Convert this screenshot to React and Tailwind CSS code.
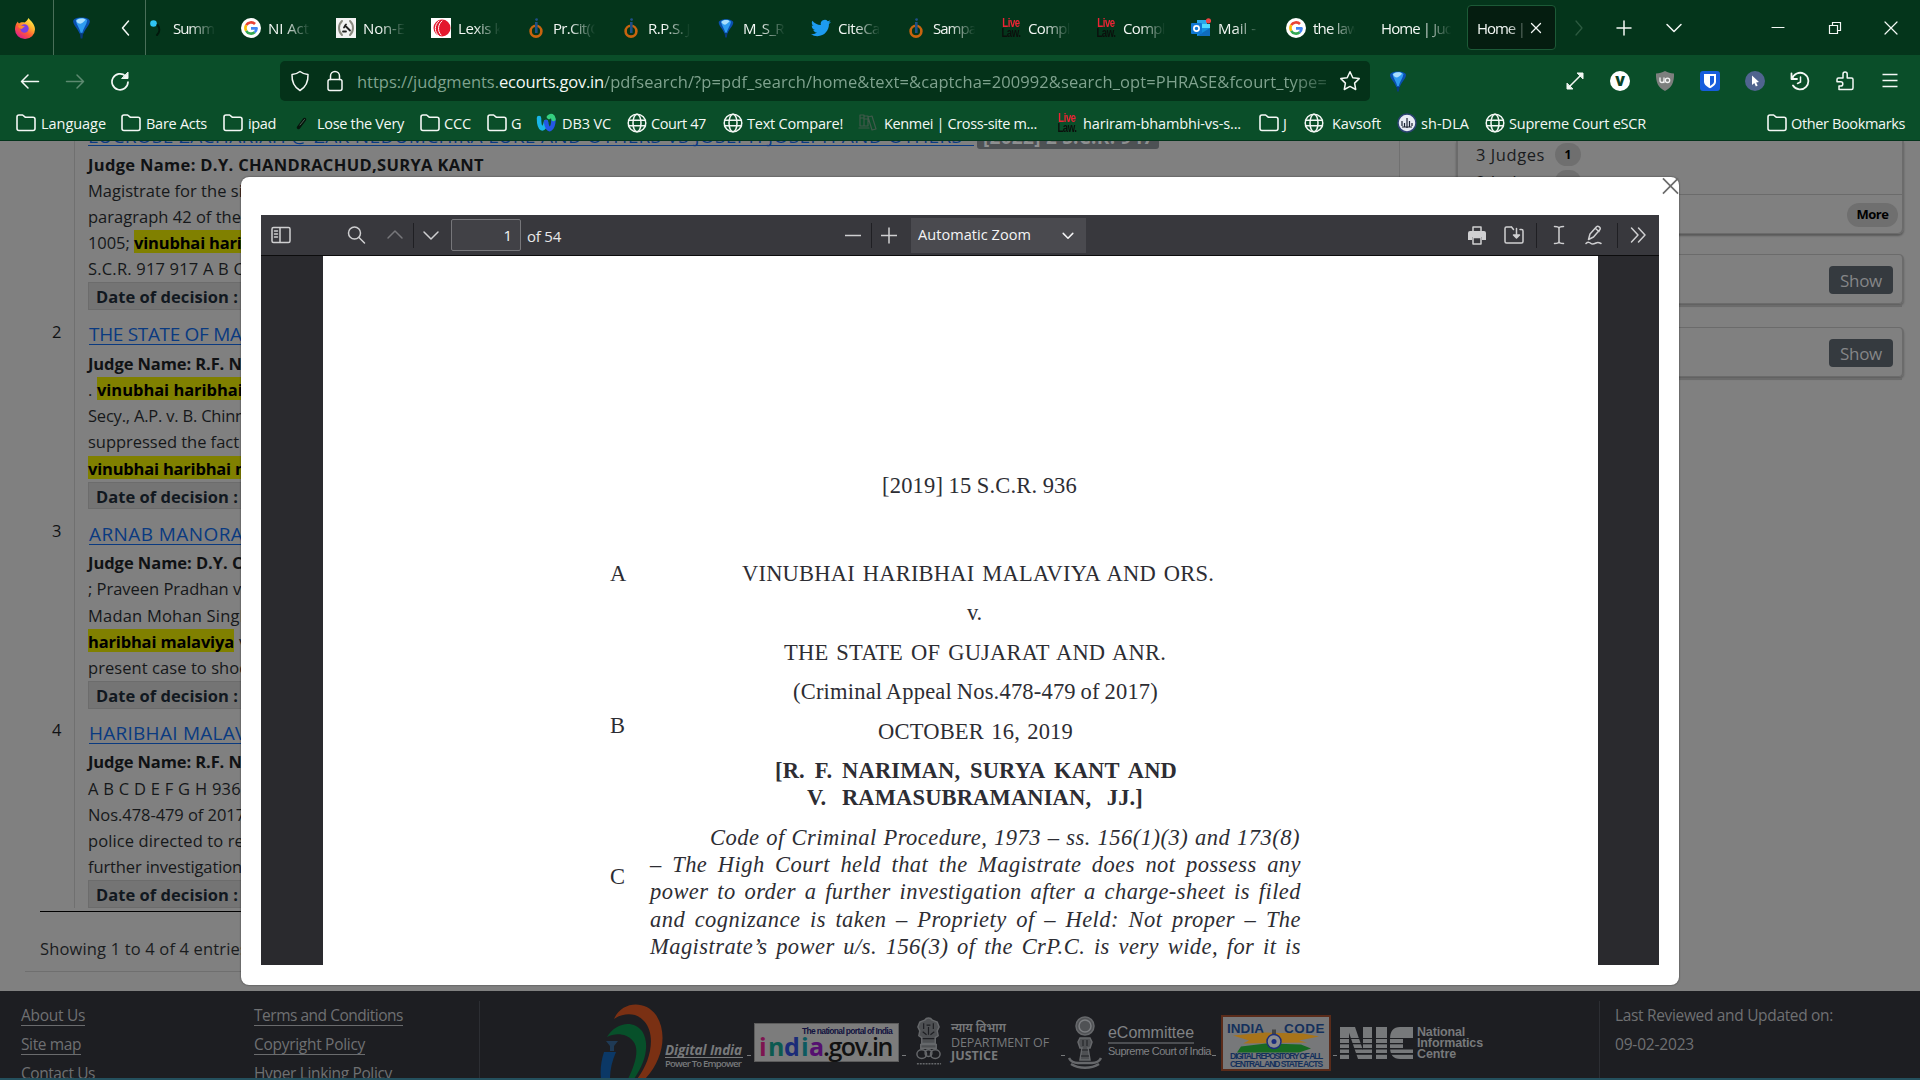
import React, { useLayoutEffect, useRef } from "react";

/*
 * Text that is spaced to occupy exactly `w` pixels. Without `track` the
 * difference goes between letters; with it, letters get `track` pixels and the
 * rest goes between words, as in justified print.
 */
function Fit({ w, track, className = "", children }) {
  const ref = useRef(null);
  useLayoutEffect(() => {
    const el = ref.current;
    const text = el.textContent;
    const spaces = text.split(" ").length - 1;
    el.style.wordSpacing = "0px";
    if (track !== undefined && spaces > 0) {
      el.style.letterSpacing = track + "px";
      el.style.wordSpacing = (w - el.getBoundingClientRect().width) / spaces + "px";
    } else {
      el.style.letterSpacing = "0px";
      el.style.letterSpacing = (w - el.getBoundingClientRect().width) / text.length + "px";
    }
  }, [w, track, children]);
  return (
    <span ref={ref} className={"inline-block whitespace-pre shrink-0 " + className}>
      {children}
    </span>
  );
}

function Svg({ s = 20, vb = 20, className = "", children }) {
  return (
    <svg width={s} height={s} viewBox={`0 0 ${vb} ${vb}`} fill="none" stroke="currentColor" strokeWidth="1.5" strokeLinecap="round" strokeLinejoin="round" className={"shrink-0 " + className}>
      {children}
    </svg>
  );
}

const Folder = () => (
  <Svg><path strokeWidth="1.6" d="M1 15.5V4a2 2 0 0 1 2-2h3.6l2.600 2.200H17a2 2 0 0 1 2 2v9.300a2 2 0 0 1-2 2H3a2 2 0 0 1-2-2z" /></Svg>
);
const Globe = () => (
  <Svg>
    <circle cx="10" cy="10" r="8.8" />
    <ellipse cx="10" cy="10" rx="4" ry="8.8" />
    <path d="M1.5 7.3h17M1.5 12.7h17" />
  </Svg>
);
const Balloon = ({ s = 22 }) => (
  <Svg s={s} vb={22}>
    <path stroke="none" fill="#0a4fae" d="M3 5C3 3 6.500 1.500 11 1.500S19 3 19 5c0 3.500-4.500 7-6.300 12H9.300C7.500 12 3 8.500 3 5z" />
    <path stroke="none" fill="#2f9bf0" d="M5.500 4C7 2.500 9 2 11 2s4 .5 5.500 2C16 8 12.500 12 11.800 16h-1.600C9.500 12 6 8 5.500 4z" />
    <path stroke="none" fill="#a9defd" d="M6 4.500C7 3 9 2.300 11 2.300c2 0 3 .4 4 1.400C13 6 11.500 7 10 7.500 8 7.500 6.500 6 6 4.500z" />
    <path stroke="none" fill="#083a7c" d="M9.500 17h3l-.6 4.500h-1.800z" />
  </Svg>
);
const Google = () => (
  <Svg>
    <circle cx="10" cy="10" r="10" fill="#fff" stroke="none" />
    <g strokeWidth="2.600" strokeLinecap="butt">
      <path stroke="#ea4335" d="M5.200 7.200A5.600 5.600 0 0 1 14 6" />
      <path stroke="#fbbc05" d="M5.200 7.200a5.600 5.600 0 0 0 0 5.600" />
      <path stroke="#34a853" d="M5.200 12.800a5.600 5.600 0 0 0 8.500 1.500" />
      <path stroke="#4285f4" d="M13.700 14.300A5.600 5.600 0 0 0 15.600 10.400H10" />
    </g>
  </Svg>
);
const Ring = () => (
  <Svg>
    <circle cx="10" cy="13.200" r="5.400" stroke="#c8640f" strokeWidth="2.600" />
    <circle cx="10.600" cy="1.600" r="1.400" fill="#1f4f86" stroke="none" />
    <path stroke="#1f4f86" strokeWidth="2.600" strokeLinecap="butt" d="M10.300 4v11" />
  </Svg>
);
const LiveLaw = () => (
  <span className="flex h-[20px] w-[20px] shrink-0 scale-x-[0.800] flex-col items-center justify-center font-['Liberation_Sans',sans-serif] text-[12px] font-bold leading-[10px] tracking-[-0.600px]">
    <span className="text-[#ee2435]">Live</span>
    <span className="text-[#0b0f0c]">Law.</span>
  </span>
);
const Twitter = () => (
  <Svg vb={24}><path fill="#1d9bf0" stroke="none" d="M23.950 4.570a10 10 0 0 1-2.820.77 4.960 4.960 0 0 0 2.160-2.720c-.95.560-2 .96-3.130 1.180a4.920 4.920 0 0 0-8.380 4.480C7.690 8.090 4.070 6.130 1.640 3.160a4.820 4.820 0 0 0-.67 2.480c0 1.710.87 3.210 2.190 4.100a4.900 4.900 0 0 1-2.230-.62v.06a4.920 4.920 0 0 0 3.950 4.830 5 5 0 0 1-2.210.08 4.940 4.940 0 0 0 4.600 3.420A9.870 9.870 0 0 1 0 19.540a14 14 0 0 0 7.550 2.210c9.050 0 14-7.500 14-13.980 0-.21 0-.42-.02-.63a9.940 9.940 0 0 0 2.460-2.550z" /></Svg>
);
const Outlook = () => (
  <Svg>
    <path stroke="none" fill="#28a8ea" d="M6 2h10v10H6z" />
    <path stroke="none" fill="#50d9ff" d="M11 6h8v8h-8z" />
    <path stroke="none" fill="#1490df" d="M6 10l13 0v8H6z" />
    <path stroke="none" fill="#0f6cbd" d="M6 18l13-8v8z" />
    <rect x="0" y="5" width="11" height="11" rx="1" fill="#0f78d4" stroke="none" />
    <circle cx="5.500" cy="10.500" r="2.600" stroke="#fff" strokeWidth="1.700" />
    <circle cx="17.500" cy="2.800" r="2.600" fill="#ef4444" stroke="none" />
  </Svg>
);
const Firefox = () => (
  <Svg s={22} vb={22}>
    <defs>
      <linearGradient id="ff" x1="18" y1="2" x2="5" y2="20" gradientUnits="userSpaceOnUse">
        <stop offset="0" stopColor="#fff44f" /><stop offset=".35" stopColor="#ffb02e" /><stop offset=".65" stopColor="#ff5a36" /><stop offset="1" stopColor="#e0208a" />
      </linearGradient>
    </defs>
    <path fill="url(#ff)" stroke="none" d="M14.500 1c1 2 3 3 4.500 5.500 1 1.500 2 3.500 2 6A10 9.500 0 0 1 1 12.500C1 9 2 6 4 4.500c0 1 .5 1.500 1 2C6.500 5 9 5 10.500 5.500c1.500-1 3-2.500 4-4.500z" />
    <circle cx="10.500" cy="11.500" r="4.200" fill="#7b3fe4" stroke="none" />
    <path fill="#ff8a2b" stroke="none" d="M4 9c2-1 4 0 6.500 0 .5 1-2 1.500-2.500 3-1.500 0-3.500-1-4-3z" />
  </Svg>
);

const TAB_TEXT = "w-[46px] overflow-hidden pt-[1px] [mask-image:linear-gradient(to_right,black_35%,transparent_92%)]";

const tabs = [
  [<Svg><circle cx="7.500" cy="5.500" r="3.300" fill="#2fc4f2" stroke="none" /><path stroke="#02180c" strokeWidth="2" d="M11.500 7c2.500 3 2.500 7-.5 10" /></Svg>, "Summ", 41],
  [<Google />, "NI Act", 41],
  [<Svg><rect width="20" height="20" fill="#f3f3f3" stroke="none" /><path stroke="#8a8a80" strokeWidth="2" d="M6 3c-4 4-4 10 0 14M14 3c4 4 4 10 0 14" /><path stroke="#222" strokeWidth="1.800" d="M10 6.500l-2 3M9 7.500l5 5M7 13.500h3" /></Svg>, "Non-E", 42],
  [<Svg><rect width="20" height="20" fill="#fff" stroke="none" /><circle cx="11" cy="10" r="8.500" fill="#e3182d" stroke="none" /><path stroke="#fff" strokeWidth="1" d="M8 3C3 7 3 14 8 18M11 3C7 6 6 13 10 17" /></Svg>, "Lexis k", 44],
  [<Ring />, "Pr.Cit(C", 46],
  [<Ring />, "R.P.S. J", 42],
  [<Balloon s={20} />, "M_S_R", 41],
  [<Twitter />, "CiteCa", 42],
  [<Ring />, "Sampa", 43],
  [<LiveLaw />, "Compl", 42],
  [<LiveLaw />, "Compl", 42],
  [<Outlook />, "Mail -", 38],
  [<Google />, "the law", 45],
];

const bookmarks = [
  ["w-[105px]", "gap-[5px]", <Folder />, "Language", 65],
  ["w-[102px]", "gap-[5px]", <Folder />, "Bare Acts", 61],
  ["w-[69px]", "gap-[5px]", <Folder />, "ipad", 28],
  ["w-[128px]", "gap-[5px]", <Svg><path stroke="#06150c" strokeWidth="3.500" d="M6.500 14.500l6-8" /><path stroke="#4c6657" strokeWidth="1" d="M8 12l4.500-5.500" /></Svg>, "Lose the Very", 87],
  ["w-[67px]", "gap-[4px]", <Folder />, "CCC", 27],
  ["w-[49px]", "gap-[4px]", <Folder />, "G", 10],
  ["w-[91px]", "gap-[6px]", <Svg><g strokeWidth="4.500"><path stroke="#19b6e8" d="M3 5c0 12 5 14 7 4" /><path stroke="#2457e6" d="M10 9c2 12 7 7 7.500-2" /><path stroke="#35d07f" d="M13 4c2-2 4-1 4.500 2" /></g></Svg>, "DB3 VC", 49],
  ["w-[96px]", "gap-[4px]", <Globe />, "Court 47", 55],
  ["w-[135px]", "gap-[4px]", <Globe />, "Text Compare!", 96],
  ["w-[199px]", "gap-[6px]", <Svg><g stroke="#41594b" strokeWidth="1.200"><path d="M2 2h4v11H2zM6 3h4v10H6zM10 4l4-1 4 13-4 1zM3 5h2M7 6h2M1 15h10" /></g></Svg>, "Kenmei | Cross-site m...", 153],
  ["w-[202px]", "gap-[6px]", <LiveLaw />, "hariram-bhambhi-vs-s...", 158],
  ["w-[45px]", "gap-[4px]", <Folder />, "J", 6],
  ["w-[93px]", "gap-[8px]", <Globe />, "Kavsoft", 49],
  ["w-[88px]", "gap-[4px]", <Svg><circle cx="10" cy="10" r="9" fill="#e8ecf4" stroke="#2d4373" strokeWidth="1.500" /><path stroke="#1c2433" strokeWidth="1.200" strokeLinecap="butt" d="M5 8v5M7.500 10v4M10 5v10M12.500 8v6M15 10v3M5 14h10" /></Svg>, "sh-DLA", 48],
  ["w-[282px]", "gap-[4px]", <Globe />, "Supreme Court eSCR", 137],
  ["", "gap-[4px]", <Folder />, "Other Bookmarks", 114],
];

function Browser() {
  return (
    <header className="h-[141px] border-b border-[#04351c] bg-[#0a4e29] text-[#f4f8f5]">
      <div className="flex h-[55px] items-center bg-[#04351b]">
        <div className="flex h-full w-[54px] items-center border-r border-[#4a6f59] pl-[14px]"><Firefox /></div>
        <div className="flex h-full w-[92px] items-center border-r border-[#4a6f59] pl-[16px]">
          <Balloon s={23} />
          <Svg className="ml-[23px]"><path d="M12.500 3L6.500 10l6 7" /></Svg>
        </div>
        <div className="flex">
          {tabs.map(([icon, label, w], i) => (
            <div key={i} className="flex w-[95px] items-center gap-[7px]">
              {icon}
              <div className={TAB_TEXT}><Fit w={w} className="text-[15px] leading-[20px]">{label}</Fit></div>
            </div>
          ))}
        </div>
        <div className="w-[86px] pt-[1px]"><div className="w-[72px] overflow-hidden [mask-image:linear-gradient(to_right,black_55%,transparent_98%)]"><Fit w={72} className="text-[15px] leading-[20px]">Home | Jud</Fit></div></div>
        <div className="flex h-[45px] w-[89px] items-center rounded-[4px] border border-[#1c5a37] bg-[#051d10] pl-[9px]">
          <div className="w-[50px] overflow-hidden pt-[1px] [mask-image:linear-gradient(to_right,black_60%,transparent_105%)]"><Fit w={48} className="text-[15px] leading-[20px]">Home |</Fit></div>
          <Svg s={14} vb={14} className="ml-[2px]"><path strokeWidth="1.300" d="M2.500 2.500l9 9M11.500 2.500l-9 9" /></Svg>
        </div>
        <Svg className="ml-[13px] text-[#2c5a40]"><path strokeWidth="1.300" d="M7 3l6 7-6 7" /></Svg>
        <Svg className="ml-[25px]"><path d="M10 3v14M3 10h14" /></Svg>
        <Svg className="ml-[30px]"><path d="M3 6.500l7 7 7-7" /></Svg>
        <Svg className="ml-[84px]"><path strokeWidth="1.200" d="M4 9.500h12" /></Svg>
        <Svg className="ml-[37px]"><path strokeWidth="1.200" strokeLinejoin="miter" d="M4.500 7.500h8v8h-8zM7.500 7.500v-3h8v8h-3" /></Svg>
        <Svg className="ml-[36px]"><path strokeWidth="1.200" d="M4 4l12 12M16 4L4 16" /></Svg>
      </div>

      <div className="flex h-[51px] items-center">
        <Svg className="ml-[20px]"><path d="M1.500 10.500h17M8 4l-6.500 6.500L8 17" /></Svg>
        <Svg className="ml-[25px] text-[#5d8a70]"><path d="M1.500 10.500h17M12 4l6.500 6.500L12 17" /></Svg>
        <Svg className="ml-[25px]"><path strokeWidth="1.700" d="M18 11a8 8 0 1 1-2.500-6" /><path strokeWidth="1" fill="currentColor" d="M18 1.500v6h-6z" /></Svg>
        <div className="ml-[150px] flex h-[40px] w-[1090px] items-center rounded-[5px] bg-[#043219] pl-[9px]">
          <Svg s={22} vb={22}><path d="M11 1.500c2.500 2 5 2.800 8 3 .3 7-2 12.500-8 16-6-3.500-8.300-9-8-16 3-.2 5.500-1 8-3z" /></Svg>
          <Svg s={22} vb={22} className="ml-[13px]"><rect x="4" y="9.500" width="14" height="11" rx="2" /><path d="M6.500 9.500V6a4.500 4.500 0 0 1 9 0v3.500" /></Svg>
          <div className="ml-[11px] flex pt-[2px] text-[16.500px] leading-[24px] text-[#7fa28e]">
            <Fit w={142}>https://judgments.</Fit>
            <Fit w={105} className="text-[#f4f8f5]">ecourts.gov.in</Fit>
            <div className="h-[24px] overflow-hidden [mask-image:linear-gradient(to_right,black_95%,transparent_102%)]"><Fit w={723}>/pdfsearch/?p=pdf_search/home&amp;text=&amp;captcha=200992&amp;search_opt=PHRASE&amp;fcourt_type=</Fit></div>
          </div>
          <Svg s={22} vb={22} className="ml-[12px]"><path d="M11 1.800l2.800 5.900 6.400.9-4.600 4.500 1.100 6.400L11 16.400l-5.700 3.100 1.100-6.400L1.800 8.600l6.400-.9z" /></Svg>
        </div>
        <div className="ml-[17px]"><Balloon /></div>
        <div className="ml-[156px] flex items-center gap-[25px]">
          <Svg><path d="M3.500 16.500l13-13" /><path fill="currentColor" d="M12.500 2H18v5.500zM2 12.500V18h5.500z" strokeWidth="1" /></Svg>
          <span className="flex h-[20px] w-[20px] items-center justify-center rounded-full bg-white text-[14px] font-extrabold leading-none text-[#0a4226]">V</span>
          <Svg><path fill="#7d7f7e" stroke="none" d="M10 0c3 1.800 5.500 2.300 9 2.500C19.300 11 17 16.500 10 20 3 16.500.7 11 1 2.500 4.500 2.300 7 1.800 10 0z" /><path stroke="#f2f2f2" strokeWidth="1.300" d="M5 7v2.500a2 2 0 0 0 4 0V7M9 7v4.500" /><circle cx="12.500" cy="9.300" r="2.200" stroke="#f2f2f2" strokeWidth="1.300" /></Svg>
          <Svg><rect width="20" height="20" rx="3" fill="#175ddc" stroke="none" /><path fill="#fff" stroke="none" d="M4 3h12v7.500c0 3.200-3 5.200-6 6.800-3-1.600-6-3.600-6-6.800z" /><path fill="#175ddc" stroke="none" d="M10 5h4v5.500c0 2-2 3.400-4 4.500z" /></Svg>
          <Svg><circle cx="10" cy="10" r="10" fill="#50648f" stroke="none" /><path fill="#fff" stroke="none" d="M7 4.500v9.500l2.300-1.900 1.600 3.400 1.800-.9-1.600-3.200 2.900-.5z" /></Svg>
          <Svg><path strokeWidth="1.800" d="M1.500 2.500V8H7M2 8A8.300 8.300 0 1 1 3 14.500" /><path d="M10.500 6v5L7.500 12.500" /></Svg>
          <Svg><path d="M4 18.500V15h1.700a2.100 2.100 0 0 0 0-4.200H2V8.500A1.500 1.500 0 0 1 3.500 7H8V3.200a2.100 2.100 0 0 1 4.200 0V7h4.300A1.500 1.500 0 0 1 18 8.500v8.500a1.500 1.500 0 0 1-1.500 1.500z" /></Svg>
          <Svg><path strokeWidth="1.600" strokeLinecap="butt" d="M2.500 3.500h15M2.500 9.500h15M2.500 15.500h15" /></Svg>
        </div>
      </div>

      <div className="flex h-[34px] items-center pl-[16px]">
        {bookmarks.map(([w, gap, icon, label, tw]) => (
          <div key={label} className={"flex shrink-0 items-center " + w + " " + gap}>
            {icon}
            <Fit w={tw} className="h-[20px] text-[14.500px] leading-[22px]">{label}</Fit>
          </div>
        ))}
      </div>
    </header>
  );
}

const HL = ({ w, children }) => <Fit w={w} className="h-[23px] bg-[#808000] font-bold leading-[25px] text-black">{children}</Fit>;

const records = [
  {
    n: "2", link: ["THE STATE OF MAHA", 178], judge: ["Judge Name: R.F. NA", 165],
    lines: [
      <><Fit w={9}>. </Fit><HL w={150}>vinubhai haribhai </HL></>,
      <Fit w={166}>Secy., A.P. v. B. Chinna</Fit>,
      <Fit w={151}>suppressed the fact</Fit>,
      <HL w={163}>vinubhai haribhai m</HL>,
    ],
  },
  {
    n: "3", link: ["ARNAB MANORAN", 169], judge: ["Judge Name: D.Y. CH", 167],
    lines: [
      <Fit w={161}>; Praveen Pradhan vs</Fit>,
      <Fit w={162}>Madan Mohan Singh</Fit>,
      <><HL w={146}>haribhai malaviya</HL><Fit w={14}> v</Fit></>,
      <Fit w={168}>present case to shock</Fit>,
    ],
  },
  {
    n: "4", link: ["HARIBHAI MALAVIY", 174], judge: ["Judge Name: R.F. NA", 165],
    lines: [
      <Fit w={153}>A B C D E F G H 936</Fit>,
      <Fit w={157}>Nos.478-479 of 2017</Fit>,
      <Fit w={165}>police directed to reg</Fit>,
      <Fit w={154}>further investigation</Fit>,
    ],
  },
];

function RecordBody({ judge, lines }) {
  return (
    <>
      <div className="flex h-[29.500px] items-end font-bold"><Fit w={judge[1]} className="leading-[26px]">{judge[0]}</Fit></div>
      {lines.map((l, i) => <div key={i} className="flex h-[26.225px] items-end leading-[26px] text-[#16181a]"><div className="flex h-[26px] items-start">{l}</div></div>)}
      <div className="h-[27.600px] w-[300px] border border-[#6c6c6c] bg-[#747474] pl-[7px] font-bold leading-[27px] text-[#111820]"><Fit w={142}>Date of decision :</Fit></div>
    </>
  );
}

function Results() {
  return (
    <section className="w-[1400px]">
      <div className="h-[771px] overflow-hidden text-[16.500px] text-[#101214]">
        <div className="flex">
          <div className="w-[75px] shrink-0 border-r border-[#707070]" />
          <div className="h-[169px] w-[1325px] border-r border-[#707070] pl-[13px]">
            <div className="flex h-[7px] items-end gap-[3px] pb-[2px] text-[19px] text-[#0a3a80]">
              <Fit w={886} className="h-[24px] border-b border-[#0a3a80] leading-[28px]">LUCROSE ZACHARIAH @ ZAK NEDUMCHIRA LUKE AND OTHERS VS JOSEPH JOSEPH AND OTHERS -</Fit>
              <span className="-mb-[3px] h-[26px] rounded-[3px] bg-[#4d5154] pl-[6px] pr-[5px] text-[#8d8f90]"><Fit w={171} className="font-bold leading-[26px]">[2022] 2 S.C.R. 947</Fit></span>
            </div>
            <RecordBody judge={["Judge Name: D.Y. CHANDRACHUD,SURYA KANT", 396]} lines={[
              <Fit w={165}>Magistrate for the sin</Fit>,
              <Fit w={153}>paragraph 42 of the</Fit>,
              <><Fit w={46}>1005; </Fit><HL w={118}>vinubhai harib</HL></>,
              <Fit w={156}>S.C.R. 917 917 A B C</Fit>,
            ]} />
          </div>
        </div>
        {records.map((r) => (
          <div key={r.n} className="flex h-[199.300px]">
            <div className="w-[75px] shrink-0 border-r border-[#707070] pl-[52px] pt-[8.500px] leading-[26px]">{r.n}</div>
            <div className="pl-[13px]">
              <div className="flex h-[37.300px] items-end pl-[1px] text-[19px] text-[#0a3a80]">
                <div className="h-[28px]"><Fit w={r.link[1]} className="h-[26px] border-b border-[#0a3a80] leading-[30px]">{r.link[0]}</Fit></div>
              </div>
              <RecordBody judge={r.judge} lines={r.lines} />
            </div>
          </div>
        ))}
      </div>
      <div className="ml-[40px] -mt-[1px] h-[1px] bg-black" />
      <div className="ml-[25px] h-[60px] border-b border-[#6f6f6f] pl-[15px] pt-[24px] text-[16.500px] leading-[26px] text-[#1a1c1e]"><Fit w={208}>Showing 1 to 4 of 4 entries</Fit></div>
    </section>
  );
}

function Sidebar() {
  return (
    <aside className="flex flex-col pl-[56px]">
      <div className="h-[93px] w-[448px] rounded-b-[6px] border-x-2 border-b border-[#6b6b6b] shadow-[0_2px_2px_rgba(0,0,0,0.300)]">
        <div className="h-[54px] overflow-hidden border-b border-[#6b6b6b] pl-[18px] text-[16.500px] text-[#1a1c1e]">
          {["3 Judges", "2 Judges"].map((t) => (
            <div key={t} className="flex h-[27px] items-center gap-[10px]">
              <Fit w={69} className="leading-[25px]">{t}</Fit>
              <span className="flex h-[23px] w-[26px] items-center justify-center rounded-full bg-[#6f6f6f] text-[12px] font-bold text-black">1</span>
            </div>
          ))}
        </div>
        <div className="flex justify-end pr-[4px] pt-[8px]">
          <span className="flex h-[24px] w-[51px] items-center justify-center rounded-full bg-[#6f6f6f] text-[13px] font-bold text-black"><Fit w={32}>More</Fit></span>
        </div>
      </div>
      {[0, 1].map((i) => (
        <div key={i} className="mt-[20px] h-[53px]">
          <div className="flex h-[50px] w-[448px] justify-end rounded-[5px] border border-x-2 border-[#6b6b6b] pr-[9px] pt-[11px] shadow-[0_2px_2px_rgba(0,0,0,0.250)]">
            <span className="flex h-[28px] w-[64px] items-center justify-center rounded-[4px] bg-[#353a3f] pt-[2px] text-[17px] text-[#858688]"><Fit w={42}>Show</Fit></span>
          </div>
          <div className="h-[3px] w-[446px] border-b-2 border-[#6b6b6b]" />
        </div>
      ))}
    </aside>
  );
}

const Emblem = ({ className }) => (
  <svg viewBox="0 0 30 50" className={className} fill="none" stroke="#66686b" strokeWidth="1.500">
    <path fill="#4e5053" d="M11 3c2-3 6-3 8 0l5 2 2 5-2 4 1 5-3 2v6H8v-6l-3-2 1-5-2-4 2-5z" />
    <path stroke="#1d1e22" d="M10 6v6M20 6v6M13 8h4M15 10v8M9 15l4 3M21 15l-4 3M9 22h12" strokeWidth="1.200" />
    <path fill="#4e5053" d="M7 28h16v4H7z" />
    <ellipse cx="8" cy="38" rx="5" ry="4.500" /><ellipse cx="22" cy="38" rx="5" ry="4.500" /><circle cx="15" cy="37" r="3.500" />
    <path strokeDasharray="2 1" d="M3 48h25" />
  </svg>
);
const CourtEmblem = () => (
  <svg viewBox="0 0 36 54" className="h-[54px] w-[36px]" fill="none" stroke="#66686b" strokeWidth="1.500">
    <circle cx="18" cy="10" r="9" fill="#505255" /><circle cx="18" cy="10" r="6" stroke="#7b7d80" />
    <path fill="#4e5053" d="M13 22h10l2 4-2 6h-2l2 12H13l2-12h-2l-2-6z" />
    <path stroke="#1d1e22" strokeWidth="1" d="M16 24v6M20 24v6M15 34h6M14 40h8" />
    <path strokeWidth="2.500" d="M2 42c2 4 6 5 9 5h14c3 0 7-1 9-5M4 48c8 5 20 5 28 0" />
  </svg>
);
const Dash = ({ className }) => <span className={"h-[1px] w-[4px] shrink-0 bg-[#77797b] " + className} />;

function Footer() {
  const link = "flex h-[29px] items-start";
  const a = "h-[22px] border-b border-[#6a6b6d] leading-[23px]";
  return (
    <footer className="flex h-[87px] overflow-hidden bg-[#1d1e22] pt-[10px] text-[15.500px] text-[#6f7072]">
      <div className="w-[233px] pl-[21px] pt-[3px]">
        <div className={link}><Fit w={64} className={a}>About Us</Fit></div>
        <div className={link}><Fit w={60} className={a}>Site map</Fit></div>
        <div className={link}><Fit w={74} className={a}>Contact Us</Fit></div>
      </div>
      <div className="w-[247px] border-r border-[#2c2e33] pl-[21px] pt-[3px]">
        <div className={link}><Fit w={149} className={a}>Terms and Conditions</Fit></div>
        <div className={link}><Fit w={111} className={a}>Copyright Policy</Fit></div>
        <div className={link}><Fit w={138} className={a}>Hyper Linking Policy</Fit></div>
      </div>
      <div className="flex w-[1120px] items-start border-r border-[#2c2e33] pl-[120px]">
        <svg viewBox="0 0 66 76" className="mt-[2px] h-[76px] w-[66px] shrink-0">
          <path fill="#7a3013" d="M14 16C22-2 45-3 56 12c12 18 7 45-11 64H37C50 60 57 32 44 18 36 9 23 10 14 16z" />
          <path fill="#07502a" d="M7 34c8-14 26-18 35-6 9 14 2 34-8 48H28C35 62 40 46 33 38 26 30 15 30 7 34z" />
          <path fill="#0b3866" d="M4 49h12c-4 9-6 18-6 27H1c-1-9 0-18 3-27z" />
          <path fill="#1f3a55" d="M6 38h12l-4 5v5h-4v-5z" />
        </svg>
        <div className="mt-[38px] w-[82px] shrink-0 -ml-[1px] text-[#77797b]">
          <div className="h-[19px] w-[78px] border-b border-[#77797b] text-[13.500px] font-bold italic leading-[23px]"><Fit w={77}>Digital India</Fit></div>
          <Fit w={76} className="align-top text-[9.500px] font-semibold leading-[12px]">Power To Empower</Fit>
        </div>
        <Dash className="mt-[54px]" />
        <div className="ml-[3px] mt-[22px] h-[39px] w-[145px] shrink-0 border border-[#5c5c5c] bg-[#7c7c7c] pr-[6px] text-right">
          <div className="h-[11px] font-['Liberation_Sans',sans-serif] text-[8.500px] font-bold leading-[15px] text-[#12123f]"><Fit w={90}>The national portal of India</Fit></div>
          <div className="flex h-[26px] justify-end text-[25px] font-bold leading-[22px]">
            <Fit w={9} className="text-[#7d1450]">i</Fit><Fit w={16} className="text-[#0c5a50]">n</Fit><Fit w={17} className="text-[#1b2c78]">d</Fit><Fit w={8} className="text-[#0c5a60]">i</Fit><Fit w={14} className="text-[#551070]">a</Fit><Fit w={69} className="font-semibold text-[#111]">.gov.in</Fit>
          </div>
        </div>
        <Dash className="ml-[3px] mt-[54px]" />
        <Emblem className="ml-[8px] mt-[16px] h-[49px] w-[29px] shrink-0" />
        <div className="ml-[8px] mt-[21px] w-[110px] shrink-0 text-[#77797b]">
          <div className="h-[14px] font-['Noto_Sans_Devanagari','Noto_Sans',sans-serif] text-[12px] font-semibold leading-[15px]">न्याय विभाग</div>
          <div className="h-[13px] text-[12.500px] leading-[14px]"><Fit w={98}>DEPARTMENT OF</Fit></div>
          <div className="text-[12.500px] font-bold leading-[13px]"><Fit w={47}>JUSTICE</Fit></div>
        </div>
        <Dash className="mt-[54px]" />
        <div className="ml-[2px] mt-[15px] shrink-0"><CourtEmblem /></div>
        <div className="ml-[5px] mt-[22px] w-[104px] shrink-0 font-['Liberation_Sans',sans-serif] text-[#808285]">
          <div className="h-[21px] w-[86px] border-b-2 border-[#4c4e52] text-[16px] leading-[19px]"><Fit w={86}>eCommittee</Fit></div>
          <div className="text-[11px] leading-[14px]"><Fit w={103}>Supreme Court of India</Fit></div>
        </div>
        <Dash className="mt-[54px]" />
        <div className="ml-[5px] mt-[14px] h-[56px] w-[110px] shrink-0 border-2 border-[#5a2b1a] bg-[#77787a] font-['Liberation_Sans',sans-serif] font-bold text-[#14305c]">
          <div className="flex h-[24px] items-center justify-between px-[4px] text-[13.500px]"><Fit w={37}>INDIA</Fit><Fit w={41}>CODE</Fit></div>
          <svg viewBox="0 0 106 24" className="-mt-[13px] h-[27px] w-[106px]">
            <path fill="#a8741a" d="M10 6l32-3 38 1 16 3-20 4 8 2-64 1 6-3z" />
            <path fill="#186a22" d="M18 17l25-3 35 1 10 4-12 4H14z" />
            <rect x="49" y="0" width="4" height="5" fill="#444" />
            <circle cx="51" cy="12" r="7" fill="#8c8d90" stroke="#1c2d7c" strokeWidth="1.500" />
            <circle cx="51" cy="12" r="2.500" fill="#1c2d7c" />
          </svg>
          <div className="-mt-[2px] text-center text-[8.500px] leading-[7.500px]"><Fit w={92}>DIGITAL REPOSITORY OF ALL</Fit><Fit w={92}>CENTRAL AND STATE ACTS</Fit></div>
        </div>
        <Dash className="ml-[2px] mt-[54px]" />
        <svg viewBox="0 0 73 32" className="ml-[3px] mt-[26px] h-[32px] w-[73px] shrink-0">
          <g fill="#77797b">
            <rect x="0" y="0" width="9" height="32" /><rect x="23" y="0" width="9" height="32" /><rect x="36" y="0" width="11" height="32" />
            <polygon points="7,0 15,0 26,32 18,32" />
            <path d="M73 0H60Q50 0 50 12v8q0 12 10 12h13V21H63V11h10z" />
          </g>
          <g fill="#1d1e22"><rect y="11" width="73" height="1" /><rect y="16" width="73" height="1.300" /><rect y="21" width="73" height="1.500" /><rect y="26" width="73" height="1.800" /></g>
        </svg>
        <div className="ml-[4px] mt-[26px] font-['Liberation_Sans',sans-serif] text-[12.500px] font-bold leading-[11px] text-[#77797b]">
          <div><Fit w={48}>National</Fit></div>
          <div><Fit w={66}>Informatics</Fit></div>
          <div><Fit w={39}>Centre</Fit></div>
        </div>
      </div>
      <div className="pl-[15px] pt-[3px] leading-[23px]">
        <div className="h-[29px]"><Fit w={218}>Last Reviewed and Updated on:</Fit></div>
        <div className="h-[29px]"><Fit w={79}>09-02-2023</Fit></div>
      </div>
    </footer>
  );
}

const docLines = [
  ["h-[242.500px]", "pl-[559px]", 195, 0.2, "[2019] 15 S.C.R. 936"],
  ["h-[88px]", "pl-[419px]", 472, 0.2, "VINUBHAI HARIBHAI MALAVIYA AND ORS."],
  ["h-[39.500px]", "pl-[644px]", 15, 0.2, "v."],
  ["h-[39.500px]", "pl-[461px]", 382, 0.2, "THE STATE OF GUJARAT AND ANR."],
  ["h-[39.500px]", "pl-[470px]", 365, 0.2, "(Criminal Appeal Nos.478-479 of 2017)"],
  ["h-[39.500px]", "pl-[555px]", 195, 0.2, "OCTOBER 16, 2019"],
  ["h-[39px] font-bold", "pl-[452px]", 402, 0.15, "[R. F. NARIMAN, SURYA KANT AND"],
  ["h-[27.500px] font-bold", "pl-[484px]", 336, 0.15, "V. RAMASUBRAMANIAN, JJ.]"],
  ["h-[39.500px] italic", "pl-[387px]", 590, 0.5, "Code of Criminal Procedure, 1973 – ss. 156(1)(3) and 173(8)"],
];
const docBody = [
  "– The High Court held that the Magistrate does not possess any",
  "power to order a further investigation after a charge-sheet is filed",
  "and cognizance is taken – Propriety of – Held: Not proper – The",
  "Magistrate’s power u/s. 156(3) of the CrP.C. is very wide, for it is",
];

function PdfViewer() {
  const sep = "h-[25px] w-[1px] bg-[#1f1f23]";
  return (
    <div className="relative h-[808px] w-[1438px] rounded-[8px] bg-white px-[20px] pt-[38px] shadow-[0_0_2px_rgba(0,0,0,0.600)]">
      <svg viewBox="0 0 18 18" className="absolute right-0 top-0 h-[18px] w-[17px]" stroke="#6c6c6c" strokeWidth="1.800"><path d="M1 1l16 16M17 1L1 17" /></svg>
      <div className="flex h-[41px] items-center border-b border-[#0c0c0d] bg-[#38383d] text-[#cfcfd1]">
        <Svg className="ml-[10px]"><rect x="1" y="2.500" width="18" height="15" rx="1.500" /><path d="M9 3v14M3.500 6h3M3.500 9h3M3.500 12h3" /></Svg>
        <Svg className="ml-[55px]"><circle cx="8.500" cy="8" r="6" /><path d="M13 12.500l5.500 5.500" /></Svg>
        <Svg className="ml-[19px] text-[#77777b]"><path d="M3 13l7-7 7 7" /></Svg>
        <div className={sep + " ml-[8px]"} />
        <Svg className="ml-[7px]"><path d="M3 7l7 7 7-7" /></Svg>
        <div className="ml-[10px] flex h-[32px] w-[70px] items-center justify-end rounded-[2px] border border-[#76767a] bg-[#414146] pr-[8px] text-[15px] text-[#f4f4f5]">1</div>
        <Fit w={34} className="ml-[6px] pt-[1px] text-[15px] leading-[20px] text-[#e8e8ea]">of 54</Fit>
        <Svg className="ml-[282px]"><path strokeLinecap="butt" d="M2 10.500h16" /></Svg>
        <div className={sep + " ml-[8px]"} />
        <Svg className="ml-[7px]"><path strokeLinecap="butt" d="M2 10.500h16M10 2.500v16" /></Svg>
        <div className="ml-[12px] flex h-[35px] w-[175px] items-center justify-between bg-[#4a4a4f] pl-[7px] pr-[10px] text-[14.500px] text-[#f4f4f5]">
          <Fit w={113}>Automatic Zoom</Fit>
          <Svg s={16} vb={20}><path strokeWidth="1.900" d="M4 8l6 6 6-6" /></Svg>
        </div>
        <Svg className="ml-[381px]"><path fill="#cfcfd1" stroke="none" d="M1 8a2 2 0 0 1 2-2h14a2 2 0 0 1 2 2v7h-4v-3H5v3H1z" /><path d="M6 6V2h8v4M6 12.500h8V19H6z" /></Svg>
        <Svg className="ml-[17px]"><path d="M7.500 2H2.500A1.500 1.500 0 0 0 1 3.500v13A1.500 1.500 0 0 0 2.500 18h15a1.500 1.500 0 0 0 1.500-1.500V6a1.500 1.500 0 0 0-1.500-1.500H16M7.500 2l2 2.500" /><path d="M12.500 3.500v9M9.500 10l3 3 3-3z" fill="#cfcfd1" /></Svg>
        <div className={sep + " ml-[12px]"} />
        <Svg className="ml-[12px]"><path d="M5.500 1.500c2 0 4.500.5 4.500 2 0-1.500 2.500-2 4.500-2M10 3.500v13M5.500 18.500c2 0 4.500-.5 4.500-2 0 1.500 2.500 2 4.500 2" /></Svg>
        <Svg className="ml-[15px]"><path d="M4.500 14.500l1.500-5.500 6.500-7.200c1.500-1.300 4.500.8 3.500 2.700L9.500 12zM11.500 3.500l3.500 3M2 18.500c2-2 4-1 5 0s4 0 5-.5 3-.5 5 .5" /></Svg>
        <div className={sep + " ml-[13px]"} />
        <Svg className="ml-[10px]"><path d="M3.500 3l6.500 7-6.500 7M10.500 3l6.500 7-6.500 7" /></Svg>
      </div>
      <div className="flex h-[709px] justify-center bg-[#2a2a2e] pl-[62px] pr-[61px]">
        <div className="flex h-full w-[1275px] overflow-hidden bg-white font-['Liberation_Serif',serif] text-[22.500px] leading-[27px] text-[#2d2d33]">
          <div className="w-0 shrink-0">
            <div className="flex h-[330.500px] items-end pl-[287px]">A</div>
            <div className="flex h-[152px] items-end pl-[287px]">B</div>
            <div className="flex h-[151.500px] items-end pl-[287px]">C</div>
          </div>
          <div>
            {docLines.map(([h, pl, w, track, t]) => (
              <div key={t} className={"flex items-end " + h + " " + pl}><Fit w={w} track={track}>{t}</Fit></div>
            ))}
            {docBody.map((t) => (
              <div key={t} className="flex h-[27.400px] items-end pl-[327px] italic"><Fit w={651} track={0.45}>{t}</Fit></div>
            ))}
          </div>
        </div>
      </div>
    </div>
  );
}

export default function App() {
  return (
    <div className="relative h-[1080px] w-[1920px] overflow-hidden bg-[#808080] font-['Open_Sans','Noto_Sans',sans-serif]">
      <Browser />
      <main className="flex h-[850px] overflow-hidden">
        <Results />
        <Sidebar />
      </main>
      <Footer />
      <div className="h-[2px] bg-[#24505e]" />
      <div className="absolute left-[241px] top-[177px]"><PdfViewer /></div>
    </div>
  );
}
